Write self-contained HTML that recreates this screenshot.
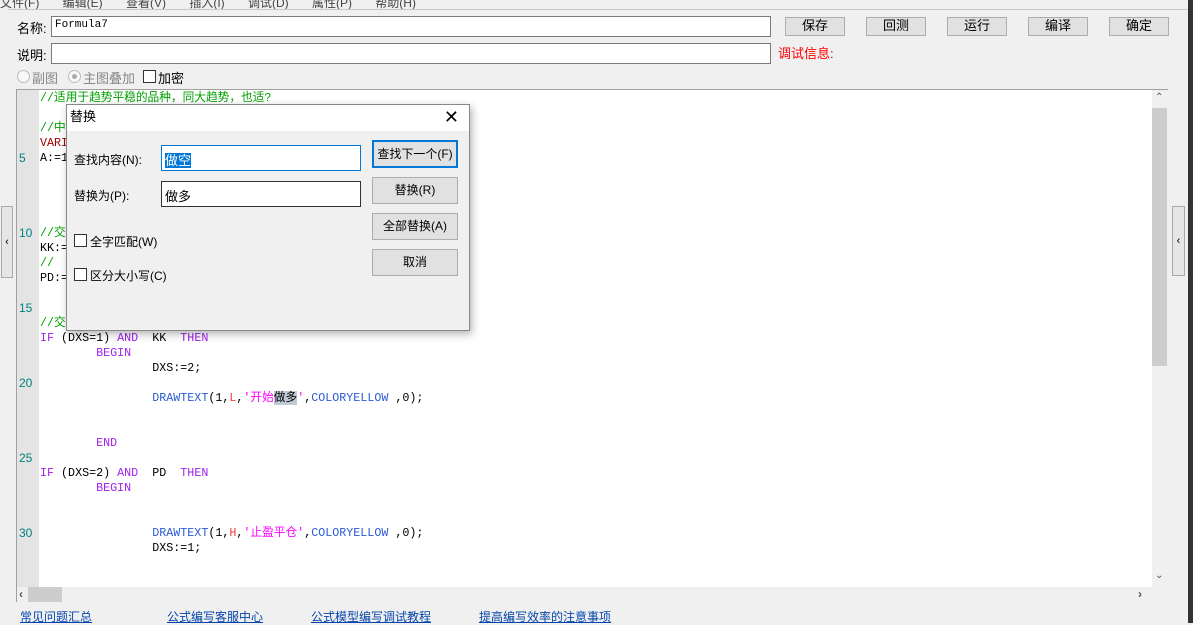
<!DOCTYPE html>
<html><head><meta charset="utf-8"><style>
*{margin:0;padding:0;box-sizing:border-box}
body{width:1193px;height:623px;background:#f0f0f0;position:relative;overflow:hidden;font-family:"Liberation Sans","Noto Sans CJK SC",sans-serif;font-size:12px;color:#000}
.a{position:absolute}
.btn{position:absolute;background:#e1e1e1;border:1px solid #adadad;text-align:center;font-size:13px;line-height:16px}
.inp{position:absolute;background:#fff;border:1px solid #7a7a7a}
.code{position:absolute;left:40px;top:91px;font-family:"Liberation Mono","Noto Sans CJK SC",monospace;font-size:11.7px}
.code div{height:15px;line-height:15px;white-space:pre;overflow:visible}
.g{color:#00a000}.p{color:#a020f0}.b{color:#2a5ad8}.r{color:#f04040}.m{color:#ff00ff}.dr{color:#a00000}
.ln{position:absolute;left:19px;font-family:"Liberation Sans",sans-serif;font-size:12px;color:#008080}
.lk{position:absolute;top:608px;color:#0645ad;text-decoration:underline;font-size:12px}
.cb{position:absolute;width:13px;height:13px;border:1px solid #333;background:#fff}
</style></head><body>
<div class="a" style="left:0;top:-6px;font-size:12px;color:#444;word-spacing:20px">文件(F) 编辑(E) 查看(V) 插入(I) 调试(D) 属性(P) 帮助(H)</div>
<div class="a" style="left:8px;top:9px;width:1180px;height:1px;background:#c8c8c8"></div>
<div class="a" style="left:17px;top:18px;font-size:13px">名称:</div>
<div class="inp" style="left:51px;top:16px;width:720px;height:21px;font-family:'Liberation Mono',monospace;font-size:11px;padding:2px 3px">Formula7</div>
<div class="a" style="left:17px;top:45px;font-size:13px">说明:</div>
<div class="inp" style="left:51px;top:43px;width:720px;height:21px"></div>
<div class="btn" style="left:785px;top:17px;width:60px;height:19px">保存</div>
<div class="btn" style="left:866px;top:17px;width:60px;height:19px">回测</div>
<div class="btn" style="left:947px;top:17px;width:60px;height:19px">运行</div>
<div class="btn" style="left:1028px;top:17px;width:60px;height:19px">编译</div>
<div class="btn" style="left:1109px;top:17px;width:60px;height:19px">确定</div>
<div class="a" style="left:778px;top:43px;color:#f00;font-size:13px">调试信息:</div>
<div class="a" style="left:17px;top:70px;width:13px;height:13px;border:1px solid #bbb;border-radius:50%;background:#f8f8f8"></div>
<div class="a" style="left:32px;top:68px;color:#888;font-size:13px">副图</div>
<div class="a" style="left:68px;top:70px;width:13px;height:13px;border:1px solid #bbb;border-radius:50%;background:#f8f8f8"><div style="margin:3px;width:5px;height:5px;border-radius:50%;background:#aaa"></div></div>
<div class="a" style="left:83px;top:68px;color:#888;font-size:13px">主图叠加</div>
<div class="cb" style="left:143px;top:70px"></div>
<div class="a" style="left:158px;top:68px;font-size:13px">加密</div>
<div class="a" style="left:16px;top:89px;width:1152px;height:513px;background:#fff;border-left:1px solid #a0a0a0;border-top:1px solid #a0a0a0"></div>
<div class="a" style="left:17px;top:90px;width:22px;height:497px;background:#e4e4e4"></div>
<div class="ln" style="top:151px">5</div><div class="ln" style="top:226px">10</div><div class="ln" style="top:301px">15</div><div class="ln" style="top:376px">20</div><div class="ln" style="top:451px">25</div><div class="ln" style="top:526px">30</div>
<div class="code">
<div class="g">//适用于趋势平稳的品种，同大趋势，也适?</div>
<div></div>
<div class="g">//中</div>
<div class="dr">VARI</div>
<div>A:=1</div>
<div></div><div></div><div></div><div></div>
<div class="g">//交</div>
<div>KK:=</div>
<div class="g">//</div>
<div>PD:=</div>
<div></div><div></div>
<div class="g">//交</div>
<div><span class="p">IF</span> (DXS=1) <span class="p">AND</span>  KK  <span class="p">THEN</span></div>
<div>        <span class="p">BEGIN</span></div>
<div>                DXS:=2;</div>
<div></div>
<div>                <span class="b">DRAWTEXT</span>(1,<span class="r">L</span>,<span class="m">'开始<span style="background:#c0cad6;color:#000">做多</span>'</span>,<span class="b">COLORYELLOW</span> ,0);</div>
<div></div><div></div>
<div>        <span class="p">END</span></div>
<div></div>
<div><span class="p">IF</span> (DXS=2) <span class="p">AND</span>  PD  <span class="p">THEN</span></div>
<div>        <span class="p">BEGIN</span></div>
<div></div><div></div>
<div>                <span class="b">DRAWTEXT</span>(1,<span class="r">H</span>,<span class="m">'止盈平仓'</span>,<span class="b">COLORYELLOW</span> ,0);</div>
<div>                DXS:=1;</div>
</div>
<div class="a" style="left:1152px;top:90px;width:16px;height:497px;background:#f0f0f0"></div>
<div class="a" style="left:1152px;top:108px;width:15px;height:258px;background:#cdcdcd"></div>
<div class="a" style="left:1155px;top:92px;font-size:10px;color:#555">⌃</div>
<div class="a" style="left:1155px;top:570px;font-size:10px;color:#555">⌄</div>
<div class="a" style="left:17px;top:587px;width:1151px;height:15px;background:#f0f0f0"></div>
<div class="a" style="left:28px;top:587px;width:34px;height:15px;background:#cdcdcd"></div>
<div class="a" style="left:19px;top:587px;font-size:12px;color:#555;font-weight:bold">‹</div>
<div class="a" style="left:1138px;top:587px;font-size:12px;color:#555;font-weight:bold">›</div>
<div class="a" style="left:1px;top:206px;width:12px;height:72px;border:1px solid #aaa;background:#e6e6e6;font-size:11px;line-height:70px;text-align:center">‹</div>
<div class="a" style="left:1172px;top:206px;width:13px;height:70px;border:1px solid #aaa;background:#e6e6e6;font-size:11px;line-height:68px;text-align:center">‹</div>
<div class="a" style="left:1188px;top:0;width:5px;height:623px;background:#333"></div>
<div class="lk" style="left:20px">常见问题汇总</div>
<div class="lk" style="left:167px">公式编写客服中心</div>
<div class="lk" style="left:311px">公式模型编写调试教程</div>
<div class="lk" style="left:479px">提高编写效率的注意事项</div>
<div class="a" style="left:66px;top:104px;width:404px;height:227px;background:#f0f0f0;border:1px solid #888;box-shadow:2px 3px 8px rgba(0,0,0,.3)">
 <div style="height:26px;background:#fff;font-size:13px;line-height:24px;padding-left:3px">替换<span style="position:absolute;right:10px;top:0;font-size:18px;line-height:24px">✕</span></div>
 <div class="a" style="left:7px;top:46px;font-size:12px">查找内容(N):</div>
 <div class="a" style="left:94px;top:40px;width:200px;height:26px;background:#fff;border:1px solid #0078d7;padding:4px 3px;font-size:13px"><span style="background:#0078d7;color:#fff">做空</span></div>
 <div class="a" style="left:7px;top:82px;font-size:12px">替换为(P):</div>
 <div class="a" style="left:94px;top:76px;width:200px;height:26px;background:#fff;border:1px solid #333;padding:4px 3px;font-size:13px">做多</div>
 <div class="cb" style="left:7px;top:129px"></div><div class="a" style="left:23px;top:128px">全字匹配(W)</div>
 <div class="cb" style="left:7px;top:163px"></div><div class="a" style="left:23px;top:162px">区分大小写(C)</div>
 <div class="btn" style="left:305px;top:35px;width:86px;height:28px;border:2px solid #0078d7;line-height:24px;font-size:12px">查找下一个(F)</div>
 <div class="btn" style="left:305px;top:72px;width:86px;height:27px;line-height:25px;font-size:12px">替换(R)</div>
 <div class="btn" style="left:305px;top:108px;width:86px;height:27px;line-height:25px;font-size:12px">全部替换(A)</div>
 <div class="btn" style="left:305px;top:144px;width:86px;height:27px;line-height:25px;font-size:12px">取消</div>
</div>
</body></html>
